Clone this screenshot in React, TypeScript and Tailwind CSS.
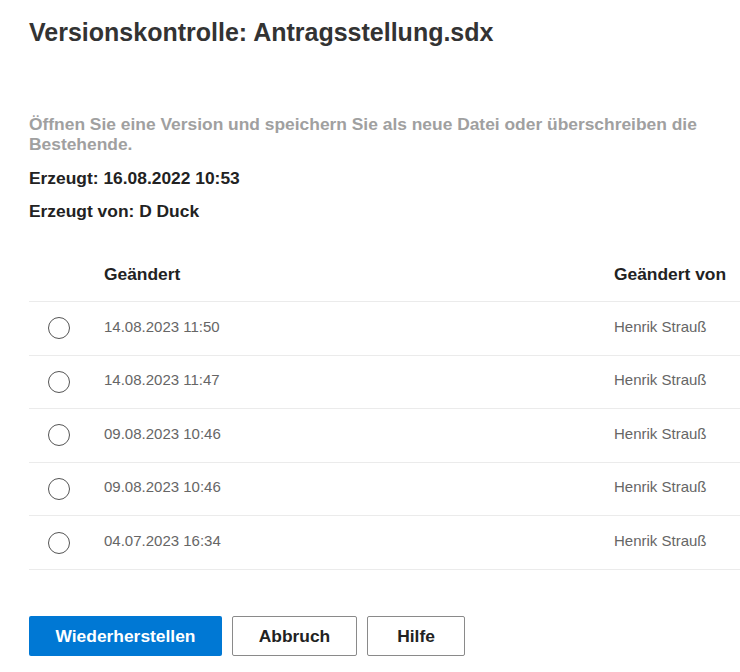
import React, { useState } from 'react'

interface Version {
  id: number
  changed: string
  changedBy: string
}

const versions: Version[] = [
  { id: 1, changed: '14.08.2023 11:50', changedBy: 'Henrik Strauß' },
  { id: 2, changed: '14.08.2023 11:47', changedBy: 'Henrik Strauß' },
  { id: 3, changed: '09.08.2023 10:46', changedBy: 'Henrik Strauß' },
  { id: 4, changed: '09.08.2023 10:46', changedBy: 'Henrik Strauß' },
  { id: 5, changed: '04.07.2023 16:34', changedBy: 'Henrik Strauß' },
]

export default function App() {
  const [selected, setSelected] = useState<number | null>(null)

  return (
    <div className="min-h-screen bg-white pl-[29px] text-[#333] font-['Liberation_Sans',Arial,sans-serif] overflow-hidden">
      {/* Title */}
      <h1 className="pt-[16px] text-[25px] leading-[32px] font-bold text-[#333]">
        Versionskontrolle: Antragsstellung.sdx
      </h1>

      {/* Info */}
      <p className="mt-[66px] pr-[20px] text-[17.4px] leading-[20px] font-bold text-[#a0a0a0]">
        Öffnen Sie eine Version und speichern Sie als neue Datei oder überschreiben die Bestehende.
      </p>
      <p className="mt-[14px] text-[17.4px] leading-[20px] font-bold text-[#222]">Erzeugt: 16.08.2022 10:53</p>
      <p className="mt-[13px] text-[17.4px] leading-[20px] font-bold text-[#222]">Erzeugt von: D Duck</p>

      {/* Versions table */}
      <div className="mt-[26px] w-[760px]">
        <div className="grid grid-cols-[75px_510px_1fr] items-center h-[55px] border-b border-[#ebebeb] text-[17.4px] font-bold text-[#222]">
          <div />
          <div>Geändert</div>
          <div>Geändert von</div>
        </div>
        {versions.map((v) => (
          <div
            key={v.id}
            onClick={() => setSelected(v.id)}
            className="grid grid-cols-[75px_510px_1fr] items-center h-[53.6px] border-b border-[#ebebeb] text-[15px] text-[#666] cursor-pointer"
          >
            <div className="pl-[19px]">
              <span className="flex items-center justify-center w-[22px] h-[22px] rounded-full border border-[#555]">
                {selected === v.id && <span className="w-[12px] h-[12px] rounded-full bg-[#0078d4]" />}
              </span>
            </div>
            <div className="pb-[3px]">{v.changed}</div>
            <div className="pb-[3px]">{v.changedBy}</div>
          </div>
        ))}
      </div>

      {/* Buttons */}
      <div className="mt-[46px] flex gap-[10px]">
        <button className="w-[193px] h-[40px] rounded-[2px] bg-[#0078d4] text-white text-[17.4px] font-bold">
          Wiederherstellen
        </button>
        <button className="w-[125px] h-[40px] rounded-[2px] border border-[#8a8a8a] bg-white text-[#222] text-[17.4px] font-bold">
          Abbruch
        </button>
        <button className="w-[98px] h-[40px] rounded-[2px] border border-[#8a8a8a] bg-white text-[#222] text-[17.4px] font-bold">
          Hilfe
        </button>
      </div>
    </div>
  )
}
